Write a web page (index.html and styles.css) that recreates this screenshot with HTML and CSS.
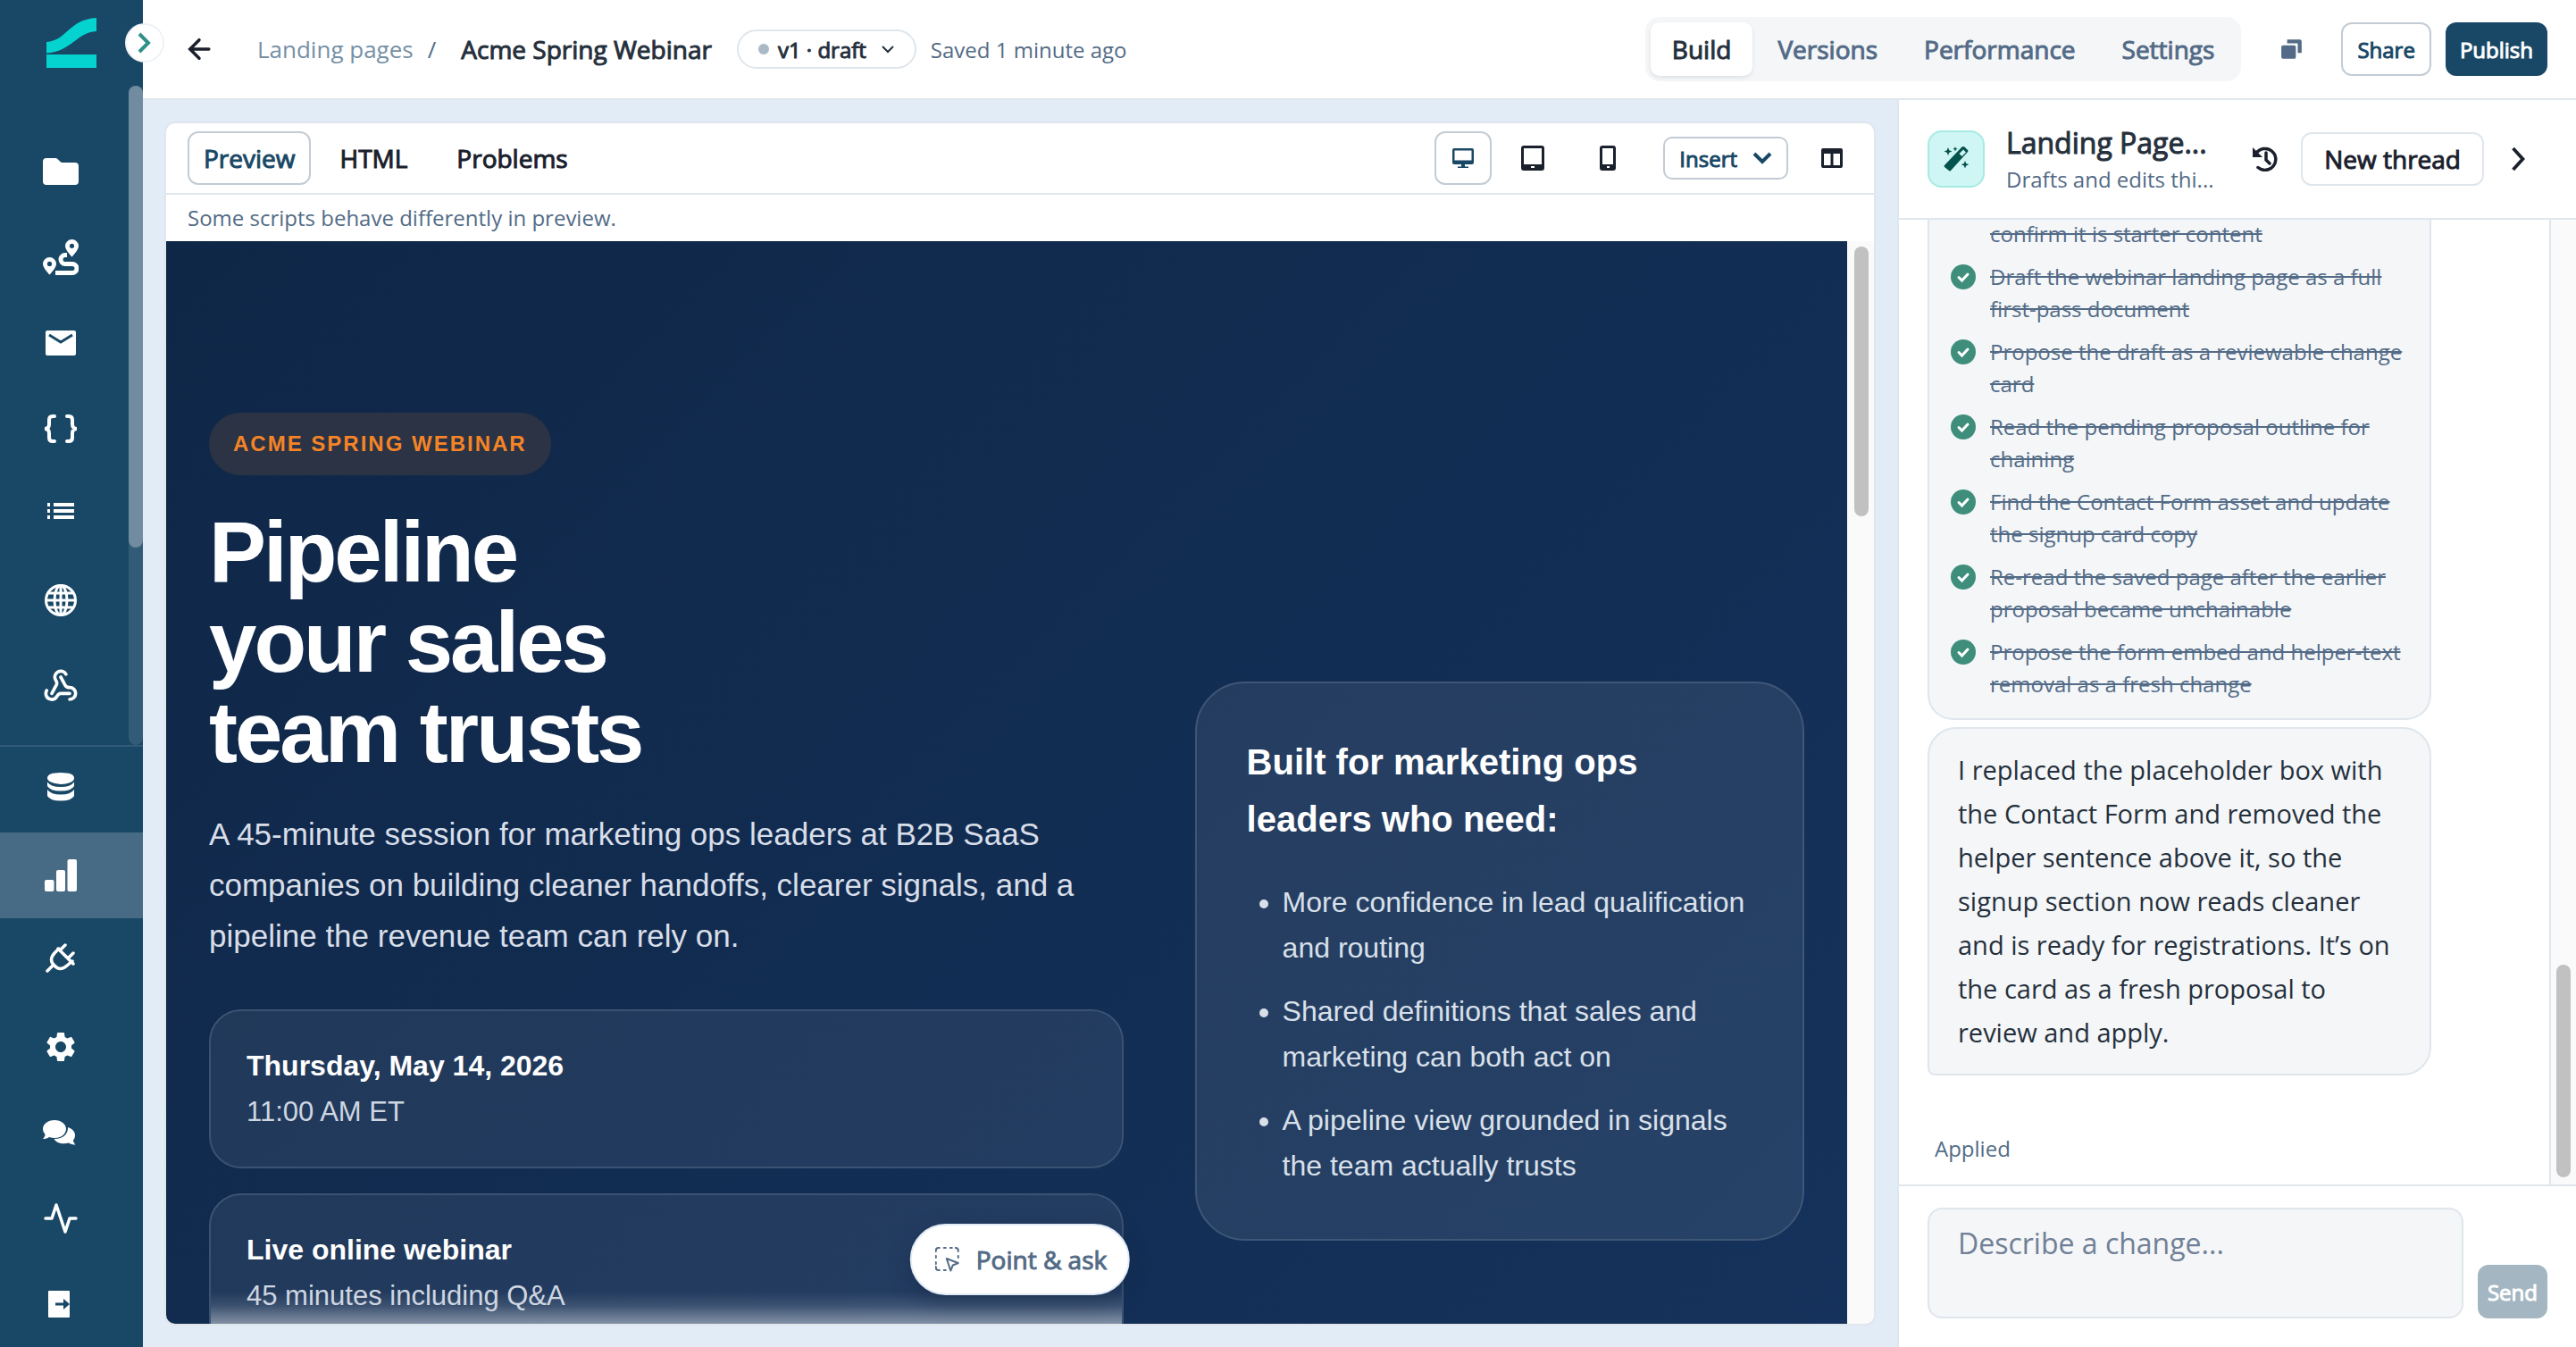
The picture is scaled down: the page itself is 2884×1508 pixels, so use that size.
FILE: index.html
```html
<!DOCTYPE html>
<html lang="en">
<head>
<meta charset="utf-8">
<meta name="viewport" content="width=device-width, initial-scale=1">
<title>Acme Spring Webinar</title>
<link rel="stylesheet" href="styles.css">
</head>
<body>
<div class="app">
  <nav class="sidebar" aria-label="Main">
    <div class="sidebar-top">
      <svg class="logo" viewBox="0 0 56 56" aria-hidden="true"><path fill="#04d3d0" d="M0 27C24 25 24 2 56 0v15C34 16 28 38 0 39.500ZM0 41h56v15H0Z"/></svg>
      <button class="expand" type="button" aria-label="Expand menu"><svg viewBox="0 0 16 24"><path d="M2 2l10 10L2 22" fill="none" stroke="currentColor" stroke-width="4"/></svg></button>
    </div>
    <div class="nav-scroll">
      <div class="nav-list">
        <a class="nav-item" href="#" aria-label="Assets"><svg viewBox="0 0 40 40"><path d="M4 5h10q1.500 0 2.500 1l3 3q1 1 2.500 1h14q4 0 4 4v17q0 4-4 4H4q-4 0-4-4V9q0-4 4-4Z"/></svg></a>
        <a class="nav-item" href="#" aria-label="Journeys"><svg viewBox="0 0 40 40"><path fill-rule="evenodd" d="M32.500 0A7.500 7.500 0 0 1 40 7.500C40 11 35 17 32.500 19.500C30 17 25 11 25 7.500A7.500 7.500 0 0 1 32.500 0Zm0 4.700a2.600 2.600 0 1 0 0 5.200a2.600 2.600 0 0 0 0-5.200ZM7.500 20A7.500 7.500 0 0 1 15 27.500C15 31 10 37 7.500 39.500C5 37 0 31 0 27.500A7.500 7.500 0 0 1 7.500 20Zm0 4.800a2.600 2.600 0 1 0 0 5.200a2.600 2.600 0 0 0 0-5.200Z"/><path d="M27 17.500h-2a5 5 0 0 0 0 10h8a5 5 0 0 1 0 10H14" fill="none" stroke="currentColor" stroke-width="5"/></svg></a>
        <a class="nav-item" href="#" aria-label="Email"><svg viewBox="0 0 40 40"><path d="M5 6h30q2 0 2 2v24q0 2-2 2H5q-2 0-2-2V8q0-2 2-2Z"/><path d="M7 11l13 8 13-8" fill="none" stroke="#194866" stroke-width="3"/></svg></a>
        <a class="nav-item" href="#" aria-label="Code"><svg viewBox="0 0 40 40"><path d="M13 6h-2q-4 0-4 4v5q0 5-5 5 5 0 5 5v5q0 4 4 4h2M27 6h2q4 0 4 4v5q0 5 5 5-5 0-5 5v5q0 4-4 4h-2" fill="none" stroke="currentColor" stroke-width="4" stroke-linecap="round"/></svg></a>
        <a class="nav-item" href="#" aria-label="Lists"><svg viewBox="0 0 40 40"><path d="M5 7h3v4H5ZM12 7h23v4H12ZM5 14h3v4H5ZM12 14h23v4H12ZM5 21h3v4H5ZM12 21h23v4H12Z"/></svg></a>
        <a class="nav-item" href="#" aria-label="Websites"><svg viewBox="0 0 40 40"><g fill="none" stroke="currentColor" stroke-width="3"><circle cx="20" cy="20" r="16.500"/><ellipse cx="20" cy="20" rx="7" ry="16.500"/><path d="M20 3v34M3 20h34M6 12h28M6 28h28"/></g></svg></a>
        <a class="nav-item" href="#" aria-label="Webhooks"><svg viewBox="0 0 24 24"><g fill="none" stroke="currentColor" stroke-width="2.200" stroke-linecap="round" stroke-linejoin="round"><path d="M18 16.980h-5.990c-1.100 0-1.950.940-2.480 1.900A4 4 0 0 1 2 17c.010-.700.200-1.400.570-2"/><path d="m6 17 3.130-5.780c.530-.970.100-2.180-.500-3.100a4 4 0 1 1 6.890-4.060"/><path d="m12 6 3.130 5.730C15.660 12.700 16.900 13 18 13a4 4 0 0 1 0 8"/></g></svg></a>
      </div>
      <div class="nav-track"><div class="nav-thumb"></div></div>
    </div>
    <div class="nav-bottom">
      <a class="nav-item" href="#" aria-label="Data"><svg viewBox="0 0 40 40"><path d="M5 7q0-6 15-6t15 6-15 7S5 13 5 7ZM5 11.500q4 5.500 15 5.500t15-5.500v4.500q-3 5.500-15 5.500T5 16ZM5 20q4 5.500 15 5.500T35 20v7q-3 5.500-15 5.500T5 27Z"/></svg></a>
      <a class="nav-item active" href="#" aria-label="Analytics" aria-current="page"><svg viewBox="0 0 40 40"><rect x="2" y="25" width="10.500" height="13" rx="2"/><rect x="15" y="14" width="10" height="24" rx="2"/><rect x="27.500" y="2" width="10.500" height="36" rx="2"/></svg></a>
      <a class="nav-item" href="#" aria-label="Integrations"><svg viewBox="0 0 40 40"><path d="M5 31l6-6M17 6l17 17M19 8l6-6M28 17l6-6M18 6l-5 5q-7 8 0 14 6 7 14 0l6-5" fill="none" stroke="currentColor" stroke-width="3.500" stroke-linecap="round" stroke-linejoin="round"/></svg></a>
      <a class="nav-item" href="#" aria-label="Settings"><svg viewBox="0 0 24 24"><path d="M19.140 12.940c.04-.3.060-.61.060-.94 0-.32-.02-.64-.07-.94l2.030-1.580a.49.49 0 0 0 .12-.61l-1.920-3.320a.488.488 0 0 0-.59-.22l-2.390.96c-.5-.38-1.030-.7-1.620-.94l-.36-2.540a.484.484 0 0 0-.48-.41h-3.840c-.24 0-.43.17-.47.41l-.36 2.540c-.59.24-1.130.57-1.620.94l-2.390-.96c-.22-.08-.47 0-.59.22L2.740 8.870c-.12.21-.08.47.12.61l2.030 1.580c-.05.3-.09.63-.09.94s.02.64.07.94l-2.030 1.580a.49.49 0 0 0-.12.61l1.920 3.320c.12.22.37.29.59.22l2.390-.96c.5.38 1.030.7 1.620.94l.36 2.540c.05.24.24.41.48.41h3.840c.24 0 .44-.17.47-.41l.36-2.540c.59-.24 1.130-.56 1.620-.94l2.390.96c.22.08.47 0 .59-.22l1.920-3.320c.12-.22.07-.47-.12-.61l-2.010-1.580zM12 15.600c-1.980 0-3.600-1.620-3.600-3.600s1.620-3.600 3.600-3.600 3.600 1.620 3.600 3.600-1.620 3.600-3.600 3.600z"/></svg></a>
      <a class="nav-item" href="#" aria-label="Chat"><svg viewBox="0 0 40 40"><path d="M13 6c7.500 0 13 4.500 13 10s-5.500 10-13 10c-2 0-4-.4-6-1-2 1.500-4 2-7 2 2-2 2.500-3.500 2.500-5C1 20 0 18 0 16 0 10.500 5.500 6 13 6ZM28 14c5 1.500 8 5 8 9 0 2-.7 4-2 5.500 0 1.500 1 3.500 2.500 5-3 0-5.500-.5-7.500-2-7 2-14 0-16.500-4.500C22 27 28.500 22 28 14Z"/></svg></a>
      <a class="nav-item" href="#" aria-label="Activity"><svg viewBox="0 0 40 40"><path d="M3 20h7l5-15 10 30 5-15h7" fill="none" stroke="currentColor" stroke-width="3.500" stroke-linecap="round" stroke-linejoin="round"/></svg></a>
      <a class="nav-item" href="#" aria-label="Log out"><svg viewBox="0 0 40 40"><path d="M7 5h22q1 0 1 1v28q0 1-1 1H7q-1 0-1-1V6q0-1 1-1Z"/><path d="M14 18.500h9V14l7 6-7 6v-4.500h-9Z" fill="#194866"/></svg></a>
    </div>
  </nav>

  <div class="page">
    <header class="topbar">
      <button class="icon-btn back" type="button" aria-label="Back"><svg viewBox="0 0 24 24"><path d="M22 12H3M12 2.500L2.500 12l9.500 9.500" fill="none" stroke="currentColor" stroke-width="3.200" stroke-linecap="round"/></svg></button>
      <div class="crumbs"><a href="#">Landing pages</a><span class="slash">/</span><h1 class="strong">Acme Spring Webinar</h1></div>
      <button class="version strong" type="button" aria-haspopup="menu"><i class="dot"></i>v1 · draft<svg viewBox="0 0 16 16"><path d="M2 5l6 6 6-6" fill="none" stroke="currentColor" stroke-width="2"/></svg></button>
      <span class="saved">Saved 1 minute ago</span>
      <div class="topbar-right">
        <div class="segments">
          <button class="segment strong selected" type="button">Build</button>
          <button class="segment strong" type="button">Versions</button>
          <button class="segment strong" type="button">Performance</button>
          <button class="segment strong" type="button">Settings</button>
        </div>
        <button class="icon-btn copy" type="button" aria-label="Duplicate"><svg viewBox="0 0 24 24"><rect x="1" y="8" width="15" height="14" rx="2"/><path d="M7 2h13q2 0 2 2v12h-4V6H7Z"/></svg></button>
        <button class="btn strong" type="button">Share</button>
        <button class="btn primary strong" type="button">Publish</button>
      </div>
    </header>

    <div class="workspace">
      <main class="canvas">
        <section class="card">
          <div class="toolbar">
            <div class="tabs">
              <button class="tab strong selected" type="button">Preview</button>
              <button class="tab strong" type="button">HTML</button>
              <button class="tab strong" type="button">Problems</button>
            </div>
            <div class="tools">
              <button class="device selected" type="button" aria-label="Desktop"><svg viewBox="0 0 28 28"><path fill-rule="evenodd" d="M4 3h20q2 0 2 2v14q0 2-2 2h-8v2.500h4V25H8v-1.500h4V21H4q-2 0-2-2V5q0-2 2-2Zm.5 2.500v11h19v-11Z"/></svg></button>
              <button class="device" type="button" aria-label="Tablet"><svg viewBox="0 0 28 28"><path fill-rule="evenodd" d="M4 0h20q3 0 3 3v22q0 3-3 3H4q-3 0-3-3V3q0-3 3-3Zm0 3v18h20V3Zm8 20v2h4v-2Z"/></svg></button>
              <button class="device" type="button" aria-label="Phone"><svg viewBox="0 0 28 28"><path fill-rule="evenodd" d="M8 0h12q3 0 3 3v22q0 3-3 3H8q-3 0-3-3V3q0-3 3-3Zm0 3v18h12V3Zm5 20v2h3v-2Z"/></svg></button>
              <button class="insert strong" type="button" aria-haspopup="menu">Insert<svg viewBox="0 0 22 22"><path d="M2 6l9 9 9-9" fill="none" stroke="currentColor" stroke-width="4"/></svg></button>
              <button class="icon-btn" type="button" aria-label="Columns"><svg viewBox="0 0 26 26"><path fill-rule="evenodd" d="M3 2h20q2 0 2 2v18q0 2-2 2H3q-2 0-2-2V4q0-2 2-2Zm1 6v13h7.500V8Zm10.500 0v13H22V8Z"/></svg></button>
            </div>
          </div>
          <p class="notice">Some scripts behave differently in preview.</p>
          <div class="preview">
            <div class="hero">
              <div class="hero-main">
                <span class="badge">ACME SPRING WEBINAR</span>
                <h2>Pipeline<br>your sales<br>team trusts</h2>
                <p class="lead">A 45-minute session for marketing ops leaders at B2B SaaS companies on building cleaner handoffs, clearer signals, and a pipeline the revenue team can rely on.</p>
                <div class="facts">
                  <div class="fact"><strong>Thursday, May 14, 2026</strong><span>11:00 AM ET</span></div>
                  <div class="fact fading"><strong>Live online webinar</strong><span>45 minutes including Q&amp;A</span></div>
                </div>
              </div>
              <aside class="audience">
                <h3>Built for marketing ops leaders who need:</h3>
                <ul>
                  <li>More confidence in lead qualification and routing</li>
                  <li>Shared definitions that sales and marketing can both act on</li>
                  <li>A pipeline view grounded in signals the team actually trusts</li>
                </ul>
              </aside>
            </div>
            <div class="track"><div class="thumb"></div></div>
            <button class="point strong" type="button"><svg viewBox="0 0 28 28"><g fill="none" stroke="currentColor" stroke-width="2" stroke-linecap="round" stroke-linejoin="round"><path d="M1 5V4q0-3 3-3h1M10 1h2M17 1h2M23 1q3 0 3 3v1M26 10v2M1 10v2M1 17v2M1 22v1q0 3 3 3h1M10 26h2"/><path d="M13 13l13 5-6 2.500-2.500 6Z"/></g></svg>Point &amp; ask</button>
          </div>
        </section>
      </main>

      <aside class="panel">
        <header class="agent">
          <span class="agent-icon"><svg viewBox="0 0 28 28"><path fill-rule="evenodd" d="M22 0q1 0 2 1l3 3q1 1 0 2L8 27q-1 1-2 0l-5-4q-1-1 0-2L20 1q1-1 2-1Zm0 3.500l-4.500 4.500 3 3L25 6.500Z"/><path d="M5 1l1.300 3.200L9.500 5.500 6.300 6.700 5 10 3.700 6.700.5 5.500l3.200-1.300ZM13 0l.8 1.900 1.900.8-1.900.8L13 5.500l-.8-2-1.900-.8 1.900-.8ZM24 16l1.200 3 3 1.200-3 1.200-1.200 3-1.200-3-3-1.200 3-1.200Z"/></svg></span>
          <div class="agent-text"><h2 class="strong">Landing Page...</h2><p>Drafts and edits thi...</p></div>
          <button class="icon-btn history" type="button" aria-label="History"><svg viewBox="0 0 28 28"><path d="M4 7.500A12 12 0 1 1 6 23.500M15 7v8l4 4" fill="none" stroke="currentColor" stroke-width="3.500" stroke-linecap="round"/><path d="M0 1v11h11Z"/></svg></button>
          <button class="thread strong" type="button">New thread</button>
          <button class="icon-btn" type="button" aria-label="Collapse"><svg viewBox="0 0 24 24"><path d="M7 1l10 11L7 23" fill="none" stroke="currentColor" stroke-width="3.500"/></svg></button>
        </header>
        <div class="chat">
          <div class="messages">
            <ul class="todo">
              <li class="rest">confirm it is starter content</li>
              <li><svg viewBox="0 0 28 28"><circle cx="14" cy="14" r="14"/><path d="M9 14.500l3.500 3.500 6.500-7"/></svg>Draft the webinar landing page as a full first-pass document</li>
              <li><svg viewBox="0 0 28 28"><circle cx="14" cy="14" r="14"/><path d="M9 14.500l3.500 3.500 6.500-7"/></svg>Propose the draft as a reviewable change card</li>
              <li><svg viewBox="0 0 28 28"><circle cx="14" cy="14" r="14"/><path d="M9 14.500l3.500 3.500 6.500-7"/></svg>Read the pending proposal outline for chaining</li>
              <li><svg viewBox="0 0 28 28"><circle cx="14" cy="14" r="14"/><path d="M9 14.500l3.500 3.500 6.500-7"/></svg>Find the Contact Form asset and update the signup card copy</li>
              <li><svg viewBox="0 0 28 28"><circle cx="14" cy="14" r="14"/><path d="M9 14.500l3.500 3.500 6.500-7"/></svg>Re-read the saved page after the earlier proposal became unchainable</li>
              <li><svg viewBox="0 0 28 28"><circle cx="14" cy="14" r="14"/><path d="M9 14.500l3.500 3.500 6.500-7"/></svg>Propose the form embed and helper-text removal as a fresh change</li>
            </ul>
            <p class="bubble">I replaced the placeholder box with the Contact Form and removed the helper sentence above it, so the signup section now reads cleaner and is ready for registrations. It’s on the card as a fresh proposal to review and apply.</p>
            <p class="applied">Applied</p>
          </div>
          <div class="track chat-track"><div class="thumb"></div></div>
        </div>
        <form class="composer">
          <textarea aria-label="Describe a change" placeholder="Describe a change..."></textarea>
          <button class="btn send strong" type="button" disabled>Send</button>
        </form>
      </aside>
    </div>
  </div>
</div>
</body>
</html>
```
FILE: styles.css
```css
:root {
  --navy: #194866;
  --ink: #1a202c;
  --text: #25303c;
  --slate: #536b86;
  --line: #dfe6ec;
  --line-dark: #c3ccd4;
  --soft: #f4f6f8;
  --canvas: #e2ecf6;
}

* { box-sizing: border-box; }

body {
  margin: 0;
  font-family: "Open Sans", "Noto Sans", sans-serif;
  font-size: 24px;
  color: var(--text);
  background: #fff;
}

h1, h2, h3, p, ul { margin: 0; padding: 0; font-weight: 400; }
ul { list-style: none; }
a { color: inherit; text-decoration: none; }
svg { display: block; fill: currentColor; flex: none; }
button { font: inherit; color: inherit; background: none; border: 0; padding: 0; }

/* Medium weight: the regular face with a slightly heavier stroke */
.strong { font-weight: 400; -webkit-text-stroke: 1px currentColor; }
.strong svg { -webkit-text-stroke: 0; }

.app { display: flex; height: 100vh; overflow: hidden; }

/* Sidebar */
.sidebar {
  width: 160px;
  flex: none;
  display: flex;
  flex-direction: column;
  background: var(--navy);
  color: #fff;
}
.sidebar-top { position: relative; height: 96px; padding: 20px 52px; flex: none; }
.logo { width: 56px; height: 56px; }
.expand {
  position: absolute;
  top: 26px;
  right: -24px;
  z-index: 2;
  width: 44px;
  height: 44px;
  display: grid;
  place-items: center;
  border: 2px solid #eef2f8;
  border-radius: 50%;
  background: #fff;
  color: #2f9088;
}
.expand svg { width: 16px; height: 24px; }
.nav-scroll { flex: 1; min-height: 0; display: flex; overflow: hidden; }
.nav-list { flex: 1; padding: 48px 0 0 16px; margin-right: -8px; }
.nav-list .nav-item { padding-right: 32px; }
.nav-track { width: 16px; flex: none; z-index: 1; border-radius: 8px; background: #315b77; }
.nav-thumb { height: 70%; border-radius: 8px; background: #718ba0; }
.nav-bottom { border-top: 2px solid #315b77; }
.nav-item { height: 96px; display: flex; align-items: center; justify-content: center; }
.nav-bottom .nav-item { padding-right: 24px; }
.nav-item svg { width: 40px; height: 40px; }
.nav-item.active { background: #476b84; }

/* Top bar */
.page { flex: 1; min-width: 0; display: flex; flex-direction: column; }
.topbar {
  height: 112px;
  flex: none;
  display: flex;
  align-items: center;
  padding: 0 32px 0 50px;
  border-bottom: 2px solid var(--line);
}
.icon-btn { color: var(--ink); }
.icon-btn svg { width: 26px; height: 26px; }
.crumbs { display: flex; align-items: center; margin-left: 52px; }
.crumbs a { font-size: 26px; color: #7590a5; }
.crumbs .slash { margin: 0 28px 0 16px; color: var(--slate); font-size: 26px; }
.crumbs h1 { font-size: 28px; }
.version {
  height: 44px;
  margin: 0 16px 0 28px;
  padding: 0 22px;
  display: flex;
  align-items: center;
  gap: 10px;
  border: 2px solid var(--line);
  border-radius: 22px;
}
.version svg { width: 16px; height: 16px; margin-left: 6px; }
.dot { width: 12px; height: 12px; border-radius: 50%; background: #a9bac5; }
.saved { color: var(--slate); }
.topbar-right { margin-left: auto; display: flex; align-items: center; }
.segments { display: flex; gap: 4px; padding: 6px; border-radius: 16px; background: var(--soft); }
.segment { height: 60px; padding: 0 24px; border-radius: 10px; font-size: 28px; color: var(--slate); }
.segment.selected { background: #fff; color: var(--text); box-shadow: 0 2px 4px rgba(20, 40, 60, .1); }
.copy { margin: 0 42px 0 44px; color: var(--slate); }
.btn {
  height: 60px;
  padding: 0 16px;
  border: 2px solid var(--line-dark);
  border-radius: 12px;
  color: var(--navy);
}
.btn + .btn { margin-left: 16px; }
.btn.primary { border: 0; background: var(--navy); color: #fff; }

/* Canvas */
.workspace { flex: 1; min-height: 0; display: flex; }
.canvas { flex: 1; min-width: 0; padding: 24px; background: var(--canvas); display: flex; }
.card {
  flex: 1;
  min-width: 0;
  display: flex;
  flex-direction: column;
  border: 2px solid var(--line);
  border-radius: 12px;
  background: #fff;
  overflow: hidden;
}
.toolbar {
  height: 80px;
  flex: none;
  padding: 0 34px 0 24px;
  display: flex;
  align-items: center;
  justify-content: space-between;
  border-bottom: 2px solid var(--line);
}
.tabs, .tools { display: flex; align-items: center; }
.tabs { gap: 14px; }
.tab {
  height: 60px;
  padding: 0 16px;
  border: 2px solid transparent;
  border-radius: 12px;
  font-size: 28px;
  color: var(--ink);
}
.tab + .tab + .tab { margin-left: 5px; }
.tab.selected, .device.selected { border-color: var(--line-dark); color: var(--navy); }
.device {
  width: 76px;
  height: 60px;
  margin-right: 8px;
  display: grid;
  place-items: center;
  border: 2px solid transparent;
  border-radius: 12px;
  color: var(--ink);
}
.device.selected { width: 64px; }
.device svg { width: 28px; height: 28px; }
.insert {
  height: 48px;
  padding: 0 16px;
  margin: 0 36px 0 16px;
  display: flex;
  align-items: center;
  gap: 17px;
  border: 2px solid var(--line-dark);
  border-radius: 10px;
  color: var(--navy);
}
.insert svg { width: 22px; height: 22px; }
.notice { height: 52px; flex: none; padding-left: 24px; line-height: 52px; color: var(--slate); }

/* Page preview */
.preview { flex: 1; min-height: 0; display: flex; position: relative; }
.hero {
  flex: 1;
  min-width: 0;
  padding: 192px 48px 0;
  display: grid;
  grid-template-columns: 3fr 2fr;
  gap: 80px;
  align-items: start;
  overflow: hidden;
  font-family: "Liberation Sans", Arial, sans-serif;
  color: #fff;
  background: linear-gradient(135deg, #0f2747 0%, #15325c 100%);
}
.badge {
  display: block;
  width: fit-content;
  padding: 16px 27px;
  border-radius: 35px;
  background: #2b3344;
  color: #f58426;
  font-size: 24px;
  font-weight: 700;
  line-height: 38px;
  letter-spacing: 2px;
}
.hero h2 {
  margin-top: 35px;
  font-size: 96px;
  font-weight: 700;
  line-height: 101px;
  letter-spacing: -3px;
}
.lead { margin-top: 35px; font-size: 35px; line-height: 57px; color: #d8dee8; }
.facts { margin-top: 54px; display: grid; gap: 28px; }
.fact {
  padding: 36px 40px;
  border: 2px solid #3b5272;
  border-radius: 36px;
  background-color: rgba(255, 255, 255, .07);
  line-height: 51px;
}
.fact strong, .fact span { display: block; }
.fact strong { font-size: 32px; }
.fact span { font-size: 31px; color: #ced6e1; }
.fact.fading { background-image: linear-gradient(transparent 108px, rgba(255, 255, 255, .12) 124px, rgba(255, 255, 255, .5) 148px); }
.audience {
  margin-top: 301px;
  padding: 56px;
  border: 2px solid #3f5676;
  border-radius: 56px;
  background: rgba(255, 255, 255, .08);
}
.audience h3 { font-size: 40px; font-weight: 700; line-height: 64px; }
.audience ul { margin-top: 36px; padding-left: 40px; display: grid; gap: 20px; list-style: disc; }
.audience li { font-size: 32px; line-height: 51px; color: #d9e0ea; }

.track { width: 30px; flex: none; padding: 6px 6px 6px 8px; background: #fafafa; }
.thumb { height: 302px; border-radius: 8px; background: #c1c1c1; }
.point {
  position: absolute;
  left: 50%;
  bottom: 32px;
  transform: translateX(-50%);
  height: 80px;
  padding: 0 24px 0 26px;
  display: flex;
  align-items: center;
  gap: 18px;
  border: 2px solid var(--canvas);
  border-radius: 40px;
  background: #fff;
  color: var(--slate);
  font-size: 28px;
  white-space: nowrap;
  box-shadow: 0 8px 24px rgba(15, 30, 60, .3);
}
.point svg { width: 28px; height: 28px; }

/* Assistant panel */
.panel { width: 760px; flex: none; display: flex; flex-direction: column; border-left: 2px solid var(--line); }
.agent {
  height: 134px;
  flex: none;
  padding: 0 52px 0 32px;
  display: flex;
  align-items: center;
  border-bottom: 2px solid var(--line);
}
.agent-icon {
  width: 64px;
  height: 64px;
  display: grid;
  place-items: center;
  border: 2px solid #a5ebe3;
  border-radius: 16px;
  background: #cff6f4;
  color: #04534d;
}
.agent-icon svg { width: 28px; height: 28px; }
.agent-text { margin-left: 24px; padding-top: 4px; }
.agent-text h2 { font-size: 32px; line-height: 42px; }
.agent-text p { line-height: 40px; color: var(--slate); }
.history { margin: 0 26px 0 auto; }
.history svg { width: 28px; height: 28px; }
.thread {
  height: 60px;
  padding: 0 24px;
  margin-right: 25px;
  border: 2px solid var(--line);
  border-radius: 12px;
  color: var(--ink);
  font-size: 28px;
}
.chat { flex: 1; min-height: 0; display: flex; }
.messages {
  flex: 1;
  padding: 0 132px 22px 32px;
  display: flex;
  flex-direction: column;
  justify-content: flex-end;
  overflow: hidden;
}
.todo {
  padding: 0 24px 20px;
  display: grid;
  gap: 12px;
  border: 2px solid var(--line);
  border-top: 0;
  border-radius: 0 0 28px 28px;
  background: var(--soft);
  color: var(--slate);
}
.todo li { display: flex; gap: 16px; line-height: 36px; text-decoration: line-through; }
.todo .rest { padding-left: 44px; }
.todo svg { width: 28px; height: 28px; margin-top: 4px; color: #3f8e7c; }
.todo path { fill: none; stroke: #fff; stroke-width: 3; stroke-linecap: round; }
.bubble {
  margin-top: 8px;
  padding: 21px 32px 22px;
  border: 2px solid var(--line);
  border-radius: 32px 32px 32px 8px;
  background: var(--soft);
  font-size: 29px;
  line-height: 49px;
}
.applied { margin-top: 64px; padding-left: 8px; line-height: 36px; color: var(--slate); }
.chat-track {
  padding: 8px 6px;
  display: flex;
  flex-direction: column;
  justify-content: flex-end;
  border-left: 2px solid var(--line);
}
.chat-track .thumb { height: 238px; }
.composer {
  padding: 24px 32px 32px;
  display: flex;
  align-items: flex-end;
  gap: 16px;
  border-top: 2px solid var(--line);
}
textarea {
  flex: 1;
  min-width: 0;
  height: 124px;
  padding: 14px 32px;
  border: 2px solid var(--line);
  border-radius: 16px;
  background: var(--soft);
  color: var(--text);
  font: inherit;
  font-size: 32px;
  line-height: 48px;
  resize: none;
}
textarea::placeholder { color: #718096; }
.composer .send { margin: 0; padding: 0 11px; border: 0; background: #a3b6c2; color: #fff; }
```
